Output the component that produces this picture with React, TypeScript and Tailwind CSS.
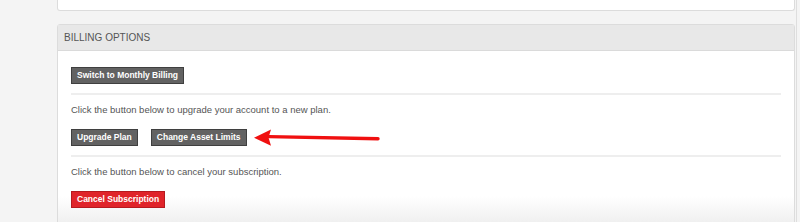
import React from "react";

function GrayButton({ children }: { children: React.ReactNode }) {
  return (
    <button className="block h-[17px] px-[5px] bg-[#626262] border border-[#3f3f3f] text-white text-[8.5px] font-bold leading-none">
      {children}
    </button>
  );
}

export default function App() {
  return (
    <div className="relative w-[800px] h-[222px] overflow-hidden bg-[#f4f4f4] pl-[57px] pr-[5px] font-['Liberation_Sans',Arial,sans-serif]">
      {/* bottom of the card above */}
      <div className="h-[11px] bg-white border border-t-0 border-[#dcdcdc] rounded-b-[3px]" />

      <div className="mt-[13px] bg-white border border-[#dcdcdc] rounded-t-[3px]">
        <div className="h-[26px] bg-[#e8e8e8] border-b border-[#dadada] flex items-center pl-[6px] text-[10px] text-[#555]">
          BILLING OPTIONS
        </div>

        <div className="px-[13px] pt-[16px] pb-[14px] bg-gradient-to-b from-white from-85% to-[#f0f0f0]">
          <GrayButton>Switch to Monthly Billing</GrayButton>
          <div className="mt-[9px] h-[2px] bg-[#eeeeee]" />
          <p className="mt-[8px] leading-[14px] text-[9.5px] text-[#555]">
            Click the button below to upgrade your account to a new plan.
          </p>
          <div className="mt-[12px] flex gap-[13px]">
            <GrayButton>Upgrade Plan</GrayButton>
            <GrayButton>Change Asset Limits</GrayButton>
          </div>
          <div className="mt-[9px] h-[2px] bg-[#eeeeee]" />
          <p className="mt-[8px] leading-[14px] text-[9.5px] text-[#555]">
            Click the button below to cancel your subscription.
          </p>
          <button className="block mt-[12px] h-[17px] px-[5px] bg-[#e0242a] border border-[#b51a1f] text-white text-[8.5px] font-bold leading-none">
            Cancel Subscription
          </button>
        </div>
      </div>

      {/* annotation arrow */}
      <svg className="absolute left-[250px] top-[126px]" width="134" height="24" viewBox="0 0 134 24">
        <path d="M19 10.6 L128 12.8" stroke="#f01010" strokeWidth="3.4" strokeLinecap="round" fill="none" />
        <path d="M4 11.8 L21 3.6 L18.5 11.5 L21 19.8 Z" fill="#f01010" />
      </svg>

      <div className="absolute right-[3px] top-0 h-full w-px bg-[#dedede]" />
    </div>
  );
}
